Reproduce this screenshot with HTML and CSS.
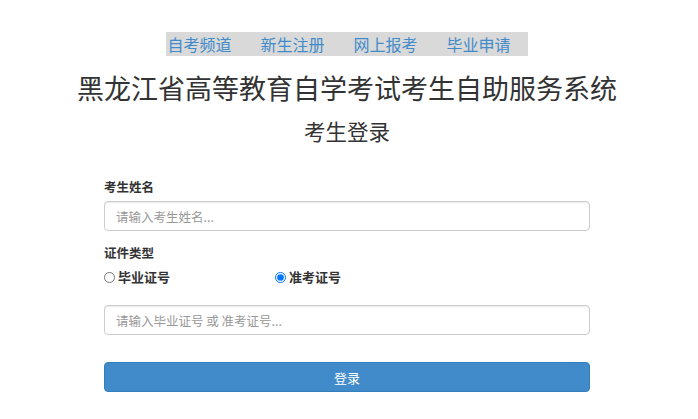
FILE: index.html
```html
<!DOCTYPE html>
<html lang="zh">
<head>
<meta charset="utf-8">
<title>考生登录</title>
<link rel="stylesheet" href="styles.css">
</head>
<body>
<div class="page">
  <nav class="topnav">
    <a href="#">自考频道</a>
    <a href="#">新生注册</a>
    <a href="#">网上报考</a>
    <a href="#">毕业申请</a>
  </nav>
  <h1 class="title">黑龙江省高等教育自学考试考生自助服务系统</h1>
  <h2 class="subtitle">考生登录</h2>
  <form class="login">
    <div class="group">
      <label class="label">考生姓名</label>
      <input class="field" type="text" placeholder="请输入考生姓名...">
    </div>
    <div class="group">
      <label class="label">证件类型</label>
      <div class="radios">
        <label class="radio"><input type="radio" name="t"> 毕业证号</label>
        <label class="radio"><input type="radio" name="t" checked> 准考证号</label>
      </div>
    </div>
    <div class="group gap-top">
      <input class="field" type="text" placeholder="请输入毕业证号 或 准考证号...">
    </div>
    <button class="btn" type="button">登录</button>
  </form>
</div>
</body>
</html>
```
FILE: styles.css
```css
* { box-sizing: border-box; }
html, body { margin: 0; padding: 0; background: #fff; }
body {
  font-family: "Noto Sans CJK SC", "Noto Sans", sans-serif;
  color: #333;
}
.page {
  display: flex;
  flex-direction: column;
  align-items: center;
  padding-top: 32px;
  padding-right: 4px;
}
.topnav {
  display: flex;
  gap: 29px;
  background: #d9d9d9;
  height: 24px;
  align-items: center;
  padding: 0 17px 0 1px;
}
.topnav a {
  color: #428bca;
  text-decoration: none;
  font-size: 16px;
  line-height: 24px;
}
.title {
  font-size: 27px;
  font-weight: normal;
  margin: 12px 0 0;
  line-height: 40px;
  color: #333;
}
.subtitle {
  font-size: 21.5px;
  font-weight: normal;
  margin: 8px 0 0;
  line-height: 30px;
  color: #333;
}
.login {
  width: 486px;
  margin-top: 32px;
  display: flex;
  flex-direction: column;
}
.group { display: flex; flex-direction: column; margin-bottom: 13px; }
.label {
  font-size: 12.5px;
  font-weight: bold;
  line-height: 18px;
  margin-bottom: 5px;
}
.field {
  height: 30px;
  border: 1px solid #ccc;
  border-radius: 4px;
  padding: 0 11px;
  font-family: inherit;
  font-size: 12.5px;
  color: #555;
  box-shadow: inset 0 1px 1px rgba(0,0,0,.075);
}
.field::placeholder { color: #999; }
.radios {
  display: grid;
  grid-template-columns: 171px 1fr;
  margin-top: 0;
}
.radio {
  display: flex;
  align-items: center;
  font-size: 13px;
  font-weight: bold;
  line-height: 20px;
}
.radio input {
  margin: 0 3px 0 0;
  width: 11px;
  height: 11px;
}
.gap-top { margin-top: 5px; margin-bottom: 0; }
.btn {
  margin-top: 27px;
  height: 30px;
  background: #428bca;
  border: 1px solid #357ebd;
  border-radius: 4px;
  color: #fff;
  font-family: inherit;
  font-size: 13px;
}
```
